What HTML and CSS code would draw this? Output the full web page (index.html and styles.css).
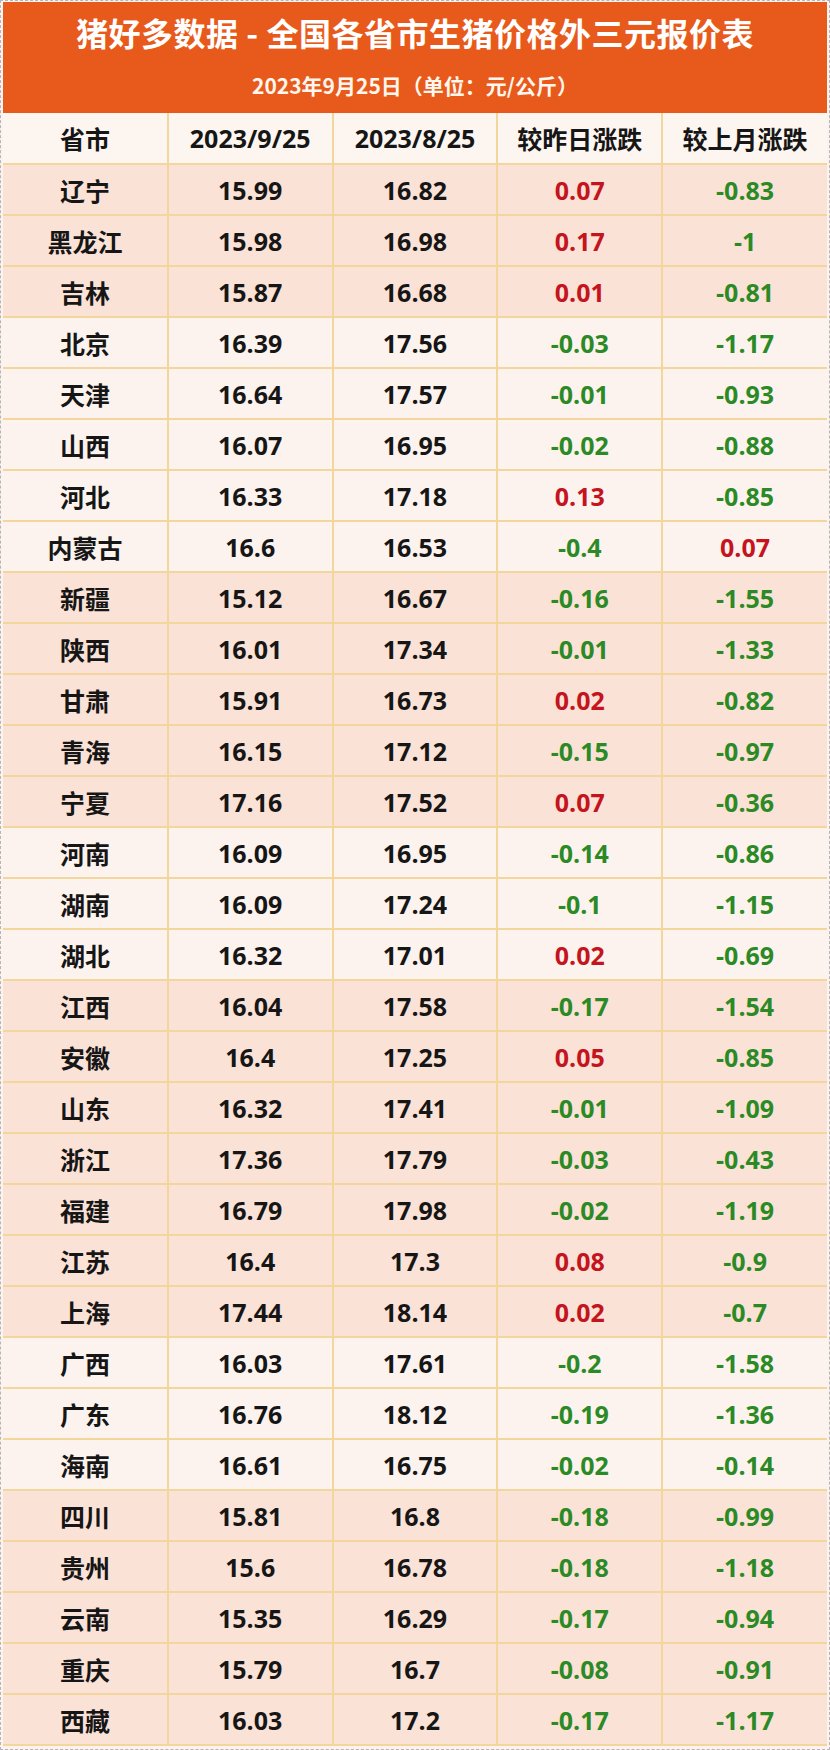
FILE: index.html
```html
<!DOCTYPE html>
<html lang="zh">
<head>
<meta charset="utf-8">
<title>猪好多数据</title>
<link rel="stylesheet" href="styles.css">
</head>
<body>
<div class="frame">
  <header class="banner">
    <h1 class="title">猪好多数据 - 全国各省市生猪价格外三元报价表</h1>
    <p class="subtitle">2023年9月25日（单位：元/公斤）</p>
  </header>
  <table class="prices">
    <thead>
      <tr class="head"><th>省市</th><th class="num">2023/9/25</th><th class="num">2023/8/25</th><th>较昨日涨跌</th><th>较上月涨跌</th></tr>
    </thead>
    <tbody>
      <tr class="pink"><td>辽宁</td><td class="num">15.99</td><td class="num">16.82</td><td class="num up">0.07</td><td class="num down">-0.83</td></tr>
      <tr class="pink"><td>黑龙江</td><td class="num">15.98</td><td class="num">16.98</td><td class="num up">0.17</td><td class="num down">-1</td></tr>
      <tr class="pink"><td>吉林</td><td class="num">15.87</td><td class="num">16.68</td><td class="num up">0.01</td><td class="num down">-0.81</td></tr>
      <tr class="light"><td>北京</td><td class="num">16.39</td><td class="num">17.56</td><td class="num down">-0.03</td><td class="num down">-1.17</td></tr>
      <tr class="light"><td>天津</td><td class="num">16.64</td><td class="num">17.57</td><td class="num down">-0.01</td><td class="num down">-0.93</td></tr>
      <tr class="light"><td>山西</td><td class="num">16.07</td><td class="num">16.95</td><td class="num down">-0.02</td><td class="num down">-0.88</td></tr>
      <tr class="light"><td>河北</td><td class="num">16.33</td><td class="num">17.18</td><td class="num up">0.13</td><td class="num down">-0.85</td></tr>
      <tr class="light"><td>内蒙古</td><td class="num">16.6</td><td class="num">16.53</td><td class="num down">-0.4</td><td class="num up">0.07</td></tr>
      <tr class="pink"><td>新疆</td><td class="num">15.12</td><td class="num">16.67</td><td class="num down">-0.16</td><td class="num down">-1.55</td></tr>
      <tr class="pink"><td>陕西</td><td class="num">16.01</td><td class="num">17.34</td><td class="num down">-0.01</td><td class="num down">-1.33</td></tr>
      <tr class="pink"><td>甘肃</td><td class="num">15.91</td><td class="num">16.73</td><td class="num up">0.02</td><td class="num down">-0.82</td></tr>
      <tr class="pink"><td>青海</td><td class="num">16.15</td><td class="num">17.12</td><td class="num down">-0.15</td><td class="num down">-0.97</td></tr>
      <tr class="pink"><td>宁夏</td><td class="num">17.16</td><td class="num">17.52</td><td class="num up">0.07</td><td class="num down">-0.36</td></tr>
      <tr class="light"><td>河南</td><td class="num">16.09</td><td class="num">16.95</td><td class="num down">-0.14</td><td class="num down">-0.86</td></tr>
      <tr class="light"><td>湖南</td><td class="num">16.09</td><td class="num">17.24</td><td class="num down">-0.1</td><td class="num down">-1.15</td></tr>
      <tr class="light"><td>湖北</td><td class="num">16.32</td><td class="num">17.01</td><td class="num up">0.02</td><td class="num down">-0.69</td></tr>
      <tr class="pink"><td>江西</td><td class="num">16.04</td><td class="num">17.58</td><td class="num down">-0.17</td><td class="num down">-1.54</td></tr>
      <tr class="pink"><td>安徽</td><td class="num">16.4</td><td class="num">17.25</td><td class="num up">0.05</td><td class="num down">-0.85</td></tr>
      <tr class="pink"><td>山东</td><td class="num">16.32</td><td class="num">17.41</td><td class="num down">-0.01</td><td class="num down">-1.09</td></tr>
      <tr class="pink"><td>浙江</td><td class="num">17.36</td><td class="num">17.79</td><td class="num down">-0.03</td><td class="num down">-0.43</td></tr>
      <tr class="pink"><td>福建</td><td class="num">16.79</td><td class="num">17.98</td><td class="num down">-0.02</td><td class="num down">-1.19</td></tr>
      <tr class="pink"><td>江苏</td><td class="num">16.4</td><td class="num">17.3</td><td class="num up">0.08</td><td class="num down">-0.9</td></tr>
      <tr class="pink"><td>上海</td><td class="num">17.44</td><td class="num">18.14</td><td class="num up">0.02</td><td class="num down">-0.7</td></tr>
      <tr class="light"><td>广西</td><td class="num">16.03</td><td class="num">17.61</td><td class="num down">-0.2</td><td class="num down">-1.58</td></tr>
      <tr class="light"><td>广东</td><td class="num">16.76</td><td class="num">18.12</td><td class="num down">-0.19</td><td class="num down">-1.36</td></tr>
      <tr class="light"><td>海南</td><td class="num">16.61</td><td class="num">16.75</td><td class="num down">-0.02</td><td class="num down">-0.14</td></tr>
      <tr class="pink"><td>四川</td><td class="num">15.81</td><td class="num">16.8</td><td class="num down">-0.18</td><td class="num down">-0.99</td></tr>
      <tr class="pink"><td>贵州</td><td class="num">15.6</td><td class="num">16.78</td><td class="num down">-0.18</td><td class="num down">-1.18</td></tr>
      <tr class="pink"><td>云南</td><td class="num">15.35</td><td class="num">16.29</td><td class="num down">-0.17</td><td class="num down">-0.94</td></tr>
      <tr class="pink"><td>重庆</td><td class="num">15.79</td><td class="num">16.7</td><td class="num down">-0.08</td><td class="num down">-0.91</td></tr>
      <tr class="pink"><td>西藏</td><td class="num">16.03</td><td class="num">17.2</td><td class="num down">-0.17</td><td class="num down">-1.17</td></tr>
    </tbody>
  </table>
</div>
</body>
</html>
```

FILE: styles.css
```css
html, body {
  margin: 0;
  padding: 0;
  background: #ffffff;
}

.frame {
  box-sizing: border-box;
  width: 830px;
  height: 1750px;
  padding: 1px 2px 2px 2px;
  border: 1px dashed #b5b5b5;
  background: #fdf3ee;
  font-family: "Noto Sans CJK SC", "Noto Sans", sans-serif;
  color: #161616;
}

.banner {
  height: 111px;
  background: #e85a1b;
  color: #ffffff;
  display: flex;
  flex-direction: column;
  align-items: center;
}

.title {
  margin: 8px 0 0 0;
  font-size: 32px;
  line-height: 44px;
  font-weight: 700;
  letter-spacing: 0.5px;
}

.subtitle {
  margin: 16px 0 0 0;
  font-size: 21px;
  line-height: 30px;
  font-weight: 700;
  color: #fff6ee;
}

.prices {
  width: 100%;
  border-collapse: collapse;
  table-layout: fixed;
}

.prices th,
.prices td {
  height: 49px;
  padding: 0;
  text-align: center;
  vertical-align: middle;
  font-size: 25px;
  font-weight: 700;
  border: 2px solid #f3d69b;
}

.prices tr > :first-child { border-left: none; }
.prices tr > :last-child { border-right: none; }

.prices thead th {
  height: 50px;
  border-top: none;
  background: #fdf5f0;
}

.num {
  font-family: "Open Sans", "Noto Sans CJK SC", sans-serif;
}

.pink { background: #fbe2d6; }
.light { background: #fdf3ee; }

.up { color: #c4141e; }
.down { color: #2b8a25; }
```
